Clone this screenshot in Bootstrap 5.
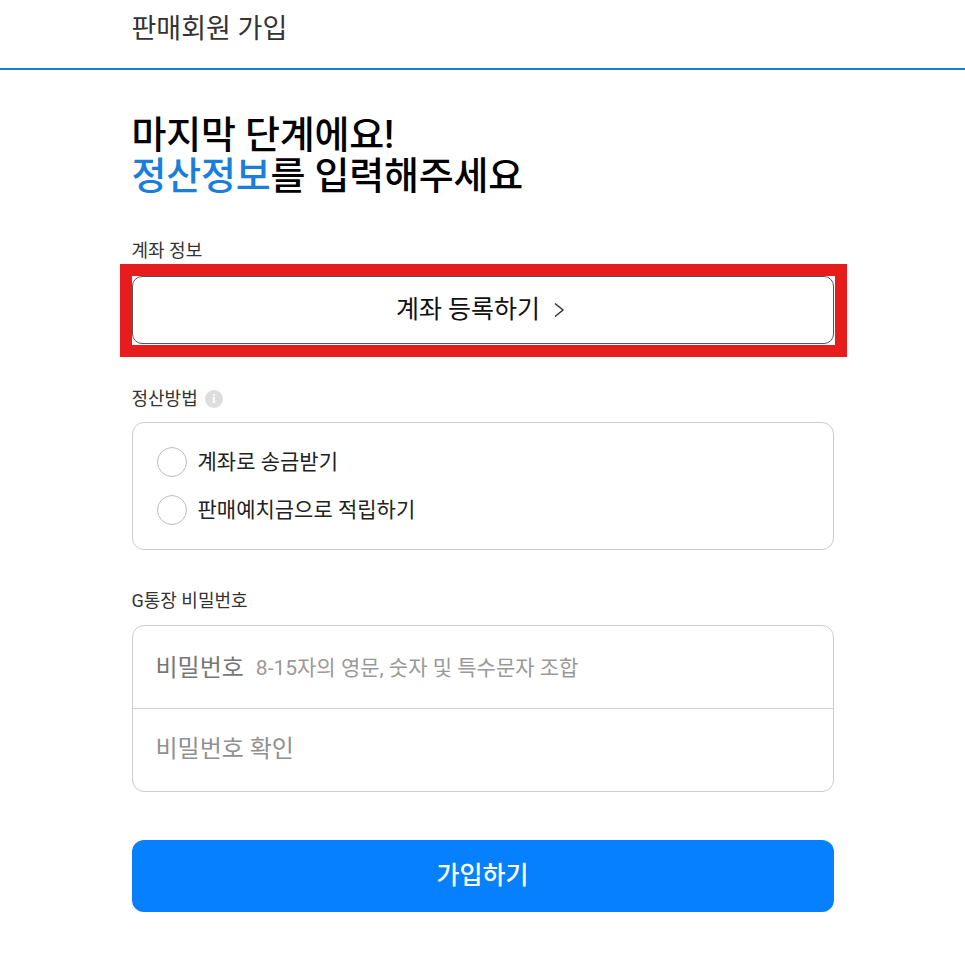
<!DOCTYPE html>
<html lang="ko">
<head>
<meta charset="utf-8">
<title>판매회원 가입</title>
<link href="https://cdn.jsdelivr.net/npm/bootstrap@5.3.0/dist/css/bootstrap.min.css" rel="stylesheet">
<style>
body{font-family:Roboto,"Noto Sans CJK KR",sans-serif;color:#222;background:#fff;overflow:hidden}
.wrap{width:702px;margin:0 auto}
.topbar{height:70px;border-bottom:2px solid #1a7fdc}
.topbar-title{font-size:27px;line-height:28px;padding-top:15px;color:#333;font-weight:400;margin:0}
.headline{font-size:38px;line-height:41px;font-weight:500;color:#000;margin:45px 0 0;letter-spacing:-.2px}
.headline em{font-style:normal;color:#1a7fdc}
.lbl{font-size:18px;line-height:24px;color:#333;margin:0}
.lbl-a{margin-top:42px}
.acct-wrap{position:relative;margin-top:13px}
.acct-btn{height:68px;width:100%;background:#fff;border:1px solid #555;border-radius:10px;font-size:25px;font-weight:400;color:#111;padding:0 4px 0 0;gap:13px}
.redbox{position:absolute;left:-12px;top:-12px;right:-13px;bottom:-13px;border:12px solid #e71d1d;pointer-events:none}
.lbl-b{margin-top:43px;gap:7px}
.infodot{width:18px;height:18px;border-radius:50%;background:#ddd;color:#fff;font-size:13px;line-height:18px;font-weight:700;text-align:center;font-family:"Liberation Serif",serif}
.paybox{margin-top:11px;height:128px;border:1px solid #ccc;border-radius:12px;padding:0 24px;gap:18px}
.opt{font-size:21px;line-height:30px;color:#222;gap:11px}
.circ{width:30px;height:30px;border:1px solid #bbb;border-radius:50%;background:#fff;flex:none}
.lbl-c{margin-top:39px}
.pwbox{margin-top:12px;height:167px;border:1px solid #ccc;border-radius:12px;overflow:hidden}
.pwrow{height:82px;padding:1px 23px 0;font-size:24px;color:#777;gap:12px}
.pwrow+.pwrow{border-top:1px solid #ccc;height:83px;padding:0 23px 2px}
.pwhint{font-size:21px;color:#999;margin-top:3px}
.pwmuted{color:#909090}
.join{margin-top:48px;height:72px;width:100%;background:#0680ff;border:0;border-radius:12px;color:#fff;font-size:25px;font-weight:500;padding:0}
.join:hover{background:#0680ff;color:#fff}
</style>
</head>
<body>
<header class="topbar">
  <div class="wrap"><h1 class="topbar-title">판매회원 가입</h1></div>
</header>
<main class="wrap">
  <h2 class="headline">마지막 단계에요!<br><em>정산정보</em>를 입력해주세요</h2>

  <p class="lbl lbl-a">계좌 정보</p>
  <div class="acct-wrap">
    <button type="button" class="btn acct-btn d-flex align-items-center justify-content-center">
      <span>계좌 등록하기</span>
      <svg width="12" height="16" viewBox="0 0 12 16" fill="none" stroke="#333" stroke-width="1.5"><path d="M2 1.500 10 8l-8 6.500"/></svg>
    </button>
    <div class="redbox"></div>
  </div>

  <div class="d-flex align-items-center lbl-b">
    <p class="lbl">정산방법</p>
    <span class="infodot">i</span>
  </div>
  <div class="paybox d-flex flex-column justify-content-center">
    <div class="opt d-flex align-items-center"><span class="circ"></span><span>계좌로 송금받기</span></div>
    <div class="opt d-flex align-items-center"><span class="circ"></span><span>판매예치금으로 적립하기</span></div>
  </div>

  <p class="lbl lbl-c">G통장 비밀번호</p>
  <div class="pwbox">
    <div class="pwrow d-flex align-items-center"><span>비밀번호</span><span class="pwhint">8-15자의 영문, 숫자 및 특수문자 조합</span></div>
    <div class="pwrow d-flex align-items-center pwmuted"><span>비밀번호 확인</span></div>
  </div>

  <button type="button" class="btn join">가입하기</button>
</main>
<script src="https://cdn.jsdelivr.net/npm/bootstrap@5.3.0/dist/js/bootstrap.bundle.min.js"></script>
</body>
</html>
